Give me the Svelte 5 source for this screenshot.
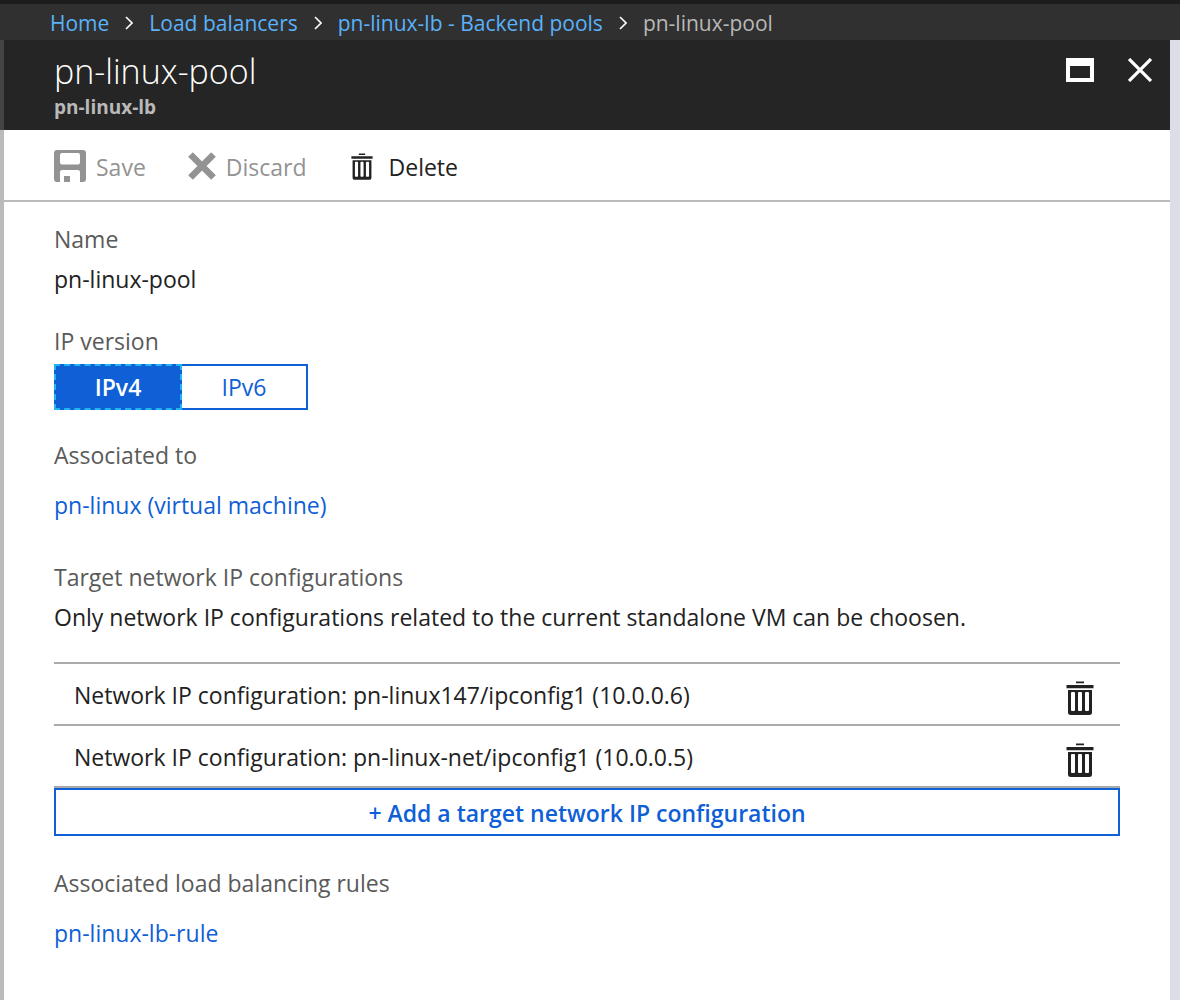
<script>
  const crumbs = ['Home', 'Load balancers', 'pn-linux-lb - Backend pools'];
  const versions = ['IPv4', 'IPv6'];
  const configs = [
    'Network IP configuration: pn-linux147/ipconfig1 (10.0.0.6)',
    'Network IP configuration: pn-linux-net/ipconfig1 (10.0.0.5)'
  ];
  let version = $state('IPv4');
</script>

{#snippet trash(kind)}
  <svg class={kind} viewBox="0 0 28 34" aria-hidden="true">
    <path d="M10 0.5h8v1.8h-8zM0.5 4h27v3.2h-27z" fill="currentColor" />
    <path
      fill="currentColor"
      fill-rule="evenodd"
      d="M2 9h24v22.5q0 2.500-3 2.500H5q-3 0-3-2.500zM6 11h2q1 0 1 1v17q0 1-1 1H6q-1 0-1-1V12q0-1 1-1zM13 11h2q1 0 1 1v17q0 1-1 1h-2q-1 0-1-1V12q0-1 1-1zM20 11h2q1 0 1 1v17q0 1-1 1h-2q-1 0-1-1V12q0-1 1-1z"
    />
  </svg>
{/snippet}

<div class="page">
  <nav aria-label="Breadcrumb">
    {#each crumbs as crumb}
      <a href="#top">{crumb}</a>
      <svg class="chevron" viewBox="0 0 8 14" aria-hidden="true">
        <path d="M1 1l6 6-6 6" fill="none" stroke="#fff" stroke-width="1.6" />
      </svg>
    {/each}
    <span>pn-linux-pool</span>
  </nav>

  <div class="blade">
    <header>
      <div class="titles">
        <h1>pn-linux-pool</h1>
        <p>pn-linux-lb</p>
      </div>
      <div class="window">
        <button aria-label="Maximize">
          <svg width="28" height="24" viewBox="0 0 28 24" aria-hidden="true">
            <path d="M0 0h28v24H0zM4 8v12h20V8z" fill="#fff" fill-rule="evenodd" />
          </svg>
        </button>
        <button aria-label="Close">
          <svg width="24" height="24" viewBox="0 0 24 24" aria-hidden="true">
            <path d="M1 1l22 22M23 1L1 23" stroke="#fff" stroke-width="3.2" />
          </svg>
        </button>
      </div>
    </header>

    <div class="toolbar">
      <button class="save" disabled>
        <svg width="32" height="32" viewBox="0 0 32 32" aria-hidden="true">
          <path
            fill="currentColor"
            fill-rule="evenodd"
            d="M3 0h26q3 0 3 3v26q0 3-3 3h-3V22q0-2-2-2H8q-2 0-2 2v10H3q-3 0-3-3V3q0-3 3-3zM8 3q-2 0-2 2v7.500q0 2 2 2h16q2 0 2-2V5q0-2-2-2z"
          />
          <path d="M10 26h6v6h-6z" fill="currentColor" />
        </svg>
        <span>Save</span>
      </button>
      <button class="discard" disabled>
        <svg width="28" height="28" viewBox="0 0 28 28" aria-hidden="true">
          <path d="M2.500 2.500l23 23M25.500 2.500l-23 23" stroke="currentColor" stroke-width="6.600" />
        </svg>
        <span>Discard</span>
      </button>
      <button class="delete">
        {@render trash('small')}
        <span>Delete</span>
      </button>
    </div>

    <main>
      <section>
        <h2>Name</h2>
        <p class="value">pn-linux-pool</p>
      </section>

      <fieldset>
        <legend>IP version</legend>
        <div class="picker">
          {#each versions as v}
            <label class:active={version === v}>
              <input type="radio" name="version" value={v} bind:group={version} />
              {v}
            </label>
          {/each}
        </div>
      </fieldset>

      <section>
        <h2>Associated to</h2>
        <a class="link" href="#vm">pn-linux (virtual machine)</a>
      </section>

      <section class="targets">
        <h2>Target network IP configurations</h2>
        <p class="value">Only network IP configurations related to the current standalone VM can be choosen.</p>
        <ul>
          {#each configs as config}
            <li>
              <span>{config}</span>
              <button aria-label="Remove configuration">{@render trash('large')}</button>
            </li>
          {/each}
        </ul>
        <button class="add">+ Add a target network IP configuration</button>
      </section>

      <section class="rules">
        <h2>Associated load balancing rules</h2>
        <a class="link" href="#rule">pn-linux-lb-rule</a>
      </section>
    </main>
  </div>
</div>

<style>
  :global(body) {
    margin: 0;
    background: #dcdde6;
  }
  .page {
    min-height: 100vh;
    display: flex;
    flex-direction: column;
    font: 23px/32px 'Open Sans', 'Noto Sans', sans-serif;
    color: #222;
  }
  h1, h2, p, ul, fieldset {
    margin: 0;
    padding: 0;
    border: 0;
    font-weight: 400;
  }
  button {
    font: inherit;
    color: inherit;
    background: none;
    border: 0;
    padding: 0;
  }
  svg {
    display: block;
    flex: none;
  }
  a {
    text-decoration: none;
  }
  nav {
    display: flex;
    align-items: center;
    gap: 16px;
    height: 34px;
    padding: 2px 0 0 50px;
    border-top: 4px solid #1c1c1c;
    background: #303030;
    color: #b9b9b9;
    font-size: 21px;
    white-space: nowrap;
  }
  nav a {
    color: #5ab2fa;
  }
  .chevron {
    width: 8px;
    height: 14px;
  }
  .blade {
    flex: 1;
    margin-right: 10px;
    border-left: 4px solid #bbb;
    background: #fff;
  }
  header {
    display: flex;
    justify-content: space-between;
    margin-left: -4px;
    padding: 8px 18px 10px 50px;
    border-left: 4px solid #444;
    background: #252525;
    color: #fff;
  }
  h1 {
    font-size: 34px;
    line-height: 46px;
    font-weight: 300;
  }
  header p {
    font-size: 19px;
    line-height: 26px;
    font-weight: 700;
    color: #b9b9b9;
  }
  .window {
    display: flex;
    align-items: flex-start;
    gap: 34px;
    padding-top: 10px;
  }
  .toolbar {
    display: flex;
    align-items: center;
    height: 68px;
    padding: 2px 0 0 50px;
    border-bottom: 2px solid #bababa;
  }
  .toolbar button {
    display: flex;
    align-items: center;
    gap: 10px;
  }
  .toolbar button:disabled {
    color: #939393;
  }
  .toolbar span {
    padding-top: 2px;
  }
  .discard {
    margin-left: 42px;
  }
  .toolbar .delete {
    gap: 16px;
    margin-left: 44px;
  }
  .toolbar :global(.small) {
    width: 22px;
    height: 27px;
  }
  main {
    padding: 21px 50px 40px;
  }
  h2, legend {
    font-size: 23px;
    line-height: 32px;
    color: #5a5a5a;
    padding: 0;
  }
  .value {
    margin-top: 8px;
  }
  fieldset {
    margin-top: 30px;
  }
  fieldset + section {
    margin-top: 29px;
  }
  .link {
    display: block;
    width: fit-content;
    margin-top: 18px;
    color: #0f5fd7;
  }
  .picker {
    display: flex;
    width: 254px;
    height: 46px;
    margin-top: 7px;
  }
  .picker label {
    position: relative;
    flex: 1;
    display: flex;
    align-items: center;
    justify-content: center;
    border: 2px solid #0f5fd7;
    border-left: 0;
    color: #0f5fd7;
  }
  .picker .active {
    border: 2px dashed #1fb6ee;
    background: #0f5fd7;
    color: #fff;
    font-weight: 600;
  }
  .picker input {
    position: absolute;
    inset: 0;
    margin: 0;
    appearance: none;
    outline: none;
  }
  .targets {
    margin-top: 40px;
  }
  ul {
    margin-top: 29px;
    list-style: none;
    border-top: 2px solid #aaa;
  }
  li {
    display: flex;
    align-items: center;
    justify-content: space-between;
    height: 58px;
    padding: 2px 26px 0 20px;
    border-bottom: 2px solid #aaa;
  }
  li :global(.large) {
    width: 28px;
    height: 34px;
    margin-top: 6px;
  }
  .add {
    display: block;
    width: 100%;
    height: 48px;
    padding-top: 2px;
    border: 2px solid #0f5fd7;
    color: #0f5fd7;
    font-weight: 600;
  }
  .rules {
    margin-top: 31px;
  }
</style>
